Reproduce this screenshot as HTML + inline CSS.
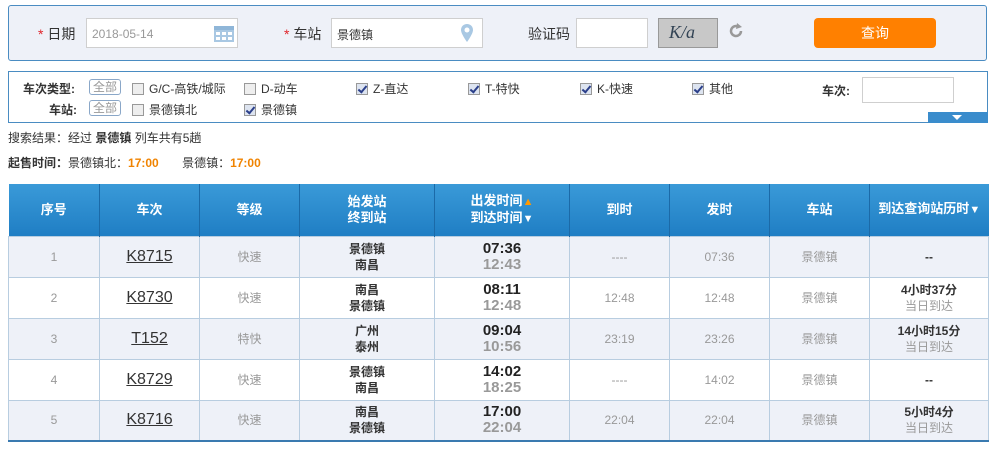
<!DOCTYPE html>
<html><head><meta charset="utf-8"><style>
*{margin:0;padding:0;box-sizing:border-box}
body{width:992px;height:452px;background:#fff;font-family:"Liberation Sans","Noto Sans CJK SC",sans-serif;font-size:12px;color:#333;position:relative;overflow:hidden}
.abs{position:absolute}
.top{left:8px;top:5px;width:979px;height:56px;background:#eef1f8;border:1px solid #4a8cc2;border-radius:3px}
.lbl{font-size:14px;color:#333}
.star{color:#e0262c}
.inp{background:#fff;border:1px solid #cfcfcf}
.filt{left:8px;top:71px;width:980px;height:52px;border:1px solid #4a8cc2}
.cb{display:inline-block;width:12px;height:12px;border:1px solid #999;background:#eee;vertical-align:-2px;margin-right:5px;position:relative}
.cb.on{background:#dde4f0}
.cb.on::after{content:"";position:absolute;left:3px;top:0px;width:3px;height:7px;border:solid #2b3f8a;border-width:0 2px 2px 0;transform:rotate(40deg)}
.all{display:inline-block;border:1px solid #8aa7c8;border-radius:3px;color:#999;font-size:12px;padding:0 3px;line-height:14px;background:#fff}
table{position:absolute;left:8px;top:184px;width:980px;border-collapse:collapse;table-layout:fixed}
th{height:52px;background:linear-gradient(#3a9ad8,#1f7ec4);color:#fff;font-size:13px;font-weight:bold;line-height:16px;border-left:1px solid #1b6aa8;border-right:1px solid #1b6aa8}
th:first-child{border-left:none}th:last-child{border-right:none}
.tri{font-size:11px}
td{height:41px;text-align:center;border:1px solid #b8cde0;color:#999;font-size:12px;line-height:16px}
tr.g td{background:#eef1f8}
tr:last-child td{border-bottom:2px solid #3a7ab0}
td.n a{color:#333;font-size:16px;text-decoration:underline}
.b{color:#333;font-weight:bold;font-size:12px}
.t1{color:#222;font-weight:bold;font-size:15px;line-height:16px}
.t2{color:#999;font-weight:bold;font-size:15px;line-height:16px}
.o{color:#f08300;font-weight:bold}
</style></head><body>
<div class="abs top"></div>
<div class="abs lbl" style="left:38px;top:24px"><span class="star">*</span> 日期</div>
<div class="abs inp" style="left:86px;top:18px;width:152px;height:30px"><span style="position:absolute;left:5px;top:8px;color:#999">2018-05-14</span>
<svg class="abs" style="left:126px;top:4px" width="22" height="20"><rect x="1" y="3" width="20" height="16" fill="#a9c8e3"/><rect x="1" y="3" width="20" height="4" fill="#8fb6d8"/><g fill="#fff"><rect x="3" y="9" width="4" height="3"/><rect x="9" y="9" width="4" height="3"/><rect x="15" y="9" width="4" height="3"/><rect x="3" y="14" width="4" height="3"/><rect x="9" y="14" width="4" height="3"/><rect x="15" y="14" width="4" height="3"/></g></svg></div>
<div class="abs lbl" style="left:284px;top:24px"><span class="star">*</span> 车站</div>
<div class="abs inp" style="left:331px;top:18px;width:152px;height:30px"><span style="position:absolute;left:5px;top:7px;color:#333">景德镇</span>
<svg class="abs" style="left:128px;top:4px" width="14" height="20"><path d="M7 1C3.5 1 1 3.6 1 7c0 4 6 12 6 12s6-8 6-12c0-3.4-2.5-6-6-6z" fill="#a9c8e3"/><circle cx="7" cy="7" r="2.5" fill="#fff"/></svg></div>
<div class="abs lbl" style="left:528px;top:24px">验证码</div>
<div class="abs inp" style="left:576px;top:18px;width:72px;height:30px"></div>
<div class="abs" style="left:658px;top:18px;width:60px;height:30px;background:#c8c8c8;border:1px solid #999;font-family:'Liberation Serif';font-style:italic;font-size:18px;color:#345;padding:3px 0 0 10px">K/a</div>
<svg class="abs" style="left:728px;top:23px" width="16" height="16"><path d="M13 8A5 5 0 1 1 10.5 3.7" fill="none" stroke="#999" stroke-width="2.5"/><path d="M9 0L14 4L8 6Z" fill="#999"/></svg>
<div class="abs" style="left:814px;top:18px;width:122px;height:30px;background:#ff8000;border-radius:4px;color:#fff;font-size:14px;text-align:center;line-height:30px">查询</div>

<div class="abs filt"></div>
<div class="abs b" style="left:23px;top:80px">车次类型:</div>
<div class="abs" style="left:89px;top:79px"><span class="all">全部</span></div>
<div class="abs" style="left:132px;top:80px"><span class="cb"></span>G/C-高铁/城际</div>
<div class="abs" style="left:244px;top:80px"><span class="cb"></span>D-动车</div>
<div class="abs" style="left:356px;top:80px"><span class="cb on"></span>Z-直达</div>
<div class="abs" style="left:468px;top:80px"><span class="cb on"></span>T-特快</div>
<div class="abs" style="left:580px;top:80px"><span class="cb on"></span>K-快速</div>
<div class="abs" style="left:692px;top:80px"><span class="cb on"></span>其他</div>
<div class="abs b" style="left:822px;top:82px">车次:</div>
<div class="abs inp" style="left:862px;top:77px;width:92px;height:26px"></div>
<div class="abs b" style="left:49px;top:101px">车站:</div>
<div class="abs" style="left:89px;top:100px"><span class="all">全部</span></div>
<div class="abs" style="left:132px;top:101px"><span class="cb"></span>景德镇北</div>
<div class="abs" style="left:244px;top:101px"><span class="cb on"></span>景德镇</div>
<div class="abs" style="left:928px;top:112px;width:60px;height:11px;background:#3a8ccc"><div style="position:absolute;left:24px;top:3px;border:5px solid transparent;border-top:5px solid #fff;border-bottom:0"></div></div>

<div class="abs" style="left:8px;top:129px">搜索结果：经过 <b>景德镇</b> 列车共有5趟</div>
<div class="abs" style="left:8px;top:154px"><b>起售时间：</b>景德镇北：<span class="o">17:00</span>&nbsp;&nbsp;&nbsp;&nbsp;&nbsp;&nbsp;&nbsp;景德镇：<span class="o">17:00</span></div>

<table>
<colgroup><col style="width:91px"><col style="width:100px"><col style="width:100px"><col style="width:135px"><col style="width:135px"><col style="width:100px"><col style="width:100px"><col style="width:100px"><col style="width:119px"></colgroup>
<tr><th>序号</th><th>车次</th><th>等级</th><th>始发站<br>终到站</th><th>出发时间<span class="tri" style="color:#f90">▲</span><br>到达时间<span class="tri">▼</span></th><th>到时</th><th>发时</th><th>车站</th><th>到达查询站历时<span class="tri">▼</span></th></tr>
<tr class="g"><td>1</td><td class="n"><a>K8715</a></td><td>快速</td><td class="b">景德镇<br>南昌</td><td><div class="t1">07:36</div><div class="t2">12:43</div></td><td>----</td><td>07:36</td><td>景德镇</td><td class="b">--</td></tr>
<tr><td>2</td><td class="n"><a>K8730</a></td><td>快速</td><td class="b">南昌<br>景德镇</td><td><div class="t1">08:11</div><div class="t2">12:48</div></td><td>12:48</td><td>12:48</td><td>景德镇</td><td><span class="b">4小时37分</span><br>当日到达</td></tr>
<tr class="g"><td>3</td><td class="n"><a>T152</a></td><td>特快</td><td class="b">广州<br>泰州</td><td><div class="t1">09:04</div><div class="t2">10:56</div></td><td>23:19</td><td>23:26</td><td>景德镇</td><td><span class="b">14小时15分</span><br>当日到达</td></tr>
<tr><td>4</td><td class="n"><a>K8729</a></td><td>快速</td><td class="b">景德镇<br>南昌</td><td><div class="t1">14:02</div><div class="t2">18:25</div></td><td>----</td><td>14:02</td><td>景德镇</td><td class="b">--</td></tr>
<tr class="g"><td>5</td><td class="n"><a>K8716</a></td><td>快速</td><td class="b">南昌<br>景德镇</td><td><div class="t1">17:00</div><div class="t2">22:04</div></td><td>22:04</td><td>22:04</td><td>景德镇</td><td><span class="b">5小时4分</span><br>当日到达</td></tr>
</table>
</body></html>
